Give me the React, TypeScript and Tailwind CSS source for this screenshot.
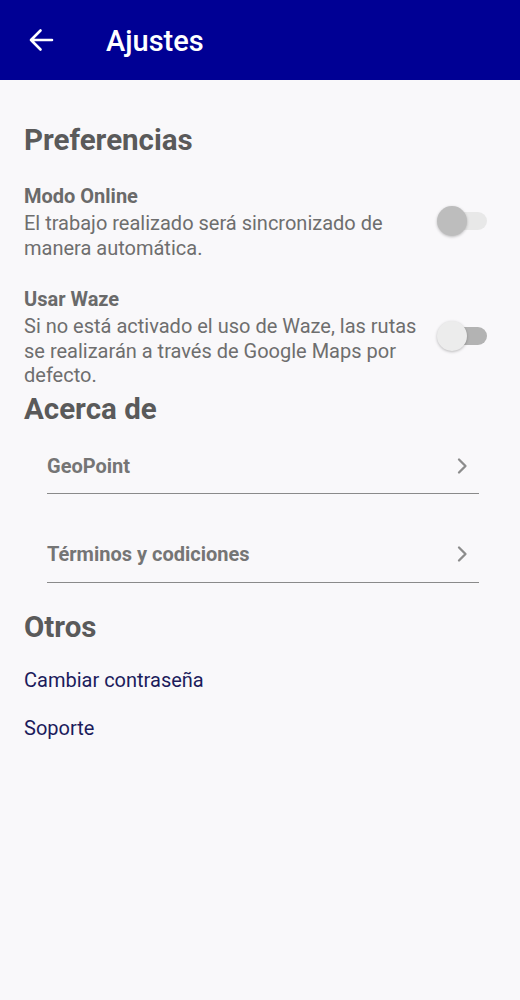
function Toggle({ thumb, track }: { thumb: string; track: string }) {
  return (
    <div className="relative w-[50px] h-[30px] shrink-0 -mt-[3px]">
      <div className={`absolute left-[6px] right-0 top-[6px] h-[18px] rounded-full ${track}`} />
      <div className={`absolute left-0 top-0 w-[30px] h-[30px] rounded-full shadow-[0_1px_3px_rgba(0,0,0,0.25)] ${thumb}`} />
    </div>
  );
}

function SwitchRow({
  title,
  text,
  thumb,
  track,
  leading,
}: {
  title: string;
  text: string;
  thumb: string;
  track: string;
  leading: string;
}) {
  return (
    <div className="flex items-center pr-[33px]">
      <div className="flex-1 pr-[8px]">
        <div className="text-[20px] leading-[24px] font-bold text-[#6a6a6a]">{title}</div>
        <p className={`mt-[3px] text-[20px] text-[#6e6e6e] ${leading}`}>{text}</p>
      </div>
      <Toggle thumb={thumb} track={track} />
    </div>
  );
}

function Chevron() {
  return (
    <svg width="14" height="18" viewBox="0 0 14 18" className="mr-[10px]" fill="none">
      <path d="M4 2.5 L10.5 9 L4 15.5" stroke="#8c8c8c" strokeWidth="2.3" strokeLinecap="round" strokeLinejoin="round" />
    </svg>
  );
}

function LinkRow({ label, className }: { label: string; className: string }) {
  return (
    <div className={`ml-[23px] mr-[41px] flex items-center justify-between border-b-[1.5px] border-[#8a8a8a] ${className}`}>
      <span className="text-[20px] leading-[24px] font-bold text-[#757575]">{label}</span>
      <Chevron />
    </div>
  );
}

export default function App() {
  return (
    <div className="min-h-[1000px] bg-[#f9f8fa] font-['Roboto',sans-serif]">
      <header className="h-[80px] bg-[#000094] flex items-center">
        <svg width="26" height="26" viewBox="0 0 26 26" className="ml-[28px]" fill="none">
          <path d="M24 13 H3 M12.5 3.5 L3 13 L12.5 22.5" stroke="white" strokeWidth="2.6" strokeLinecap="round" strokeLinejoin="round" />
        </svg>
        <h1 className="ml-[52px] mt-[3px] text-[29px] font-medium text-white">Ajustes</h1>
      </header>

      <main className="pl-[24px] pt-[42px]">
        <h2 className="text-[29.5px] leading-[36px] font-bold text-[#5a5a5a]">Preferencias</h2>

        <div className="mt-[26px]">
          <SwitchRow
            title="Modo Online"
            text="El trabajo realizado será sincronizado de manera automática."
            thumb="bg-[#bdbdbd]"
            track="bg-[#e8e8e8]"
            leading="leading-[25px]"
          />
        </div>

        <div className="mt-[26px]">
          <SwitchRow
            title="Usar Waze"
            text="Si no está activado el uso de Waze, las rutas se realizarán a través de Google Maps por defecto."
            thumb="bg-[#ececec]"
            track="bg-[#b3b3b3]"
            leading="leading-[24.5px]"
          />
        </div>

        <h2 className="mt-[3px] text-[29.5px] leading-[36px] font-bold text-[#5a5a5a]">Acerca de</h2>

        <LinkRow label="GeoPoint" className="mt-[27px] pb-[15px]" />
        <LinkRow label="Términos y codiciones" className="mt-[48px] pb-[16px]" />

        <h2 className="mt-[26px] text-[29.5px] leading-[36px] font-bold text-[#5a5a5a]">Otros</h2>

        <div className="mt-[23px] text-[20px] leading-[24px] text-[#1c1c5c]">Cambiar contraseña</div>
        <div className="mt-[24px] text-[20px] leading-[24px] text-[#1c1c5c]">Soporte</div>
      </main>
    </div>
  );
}
